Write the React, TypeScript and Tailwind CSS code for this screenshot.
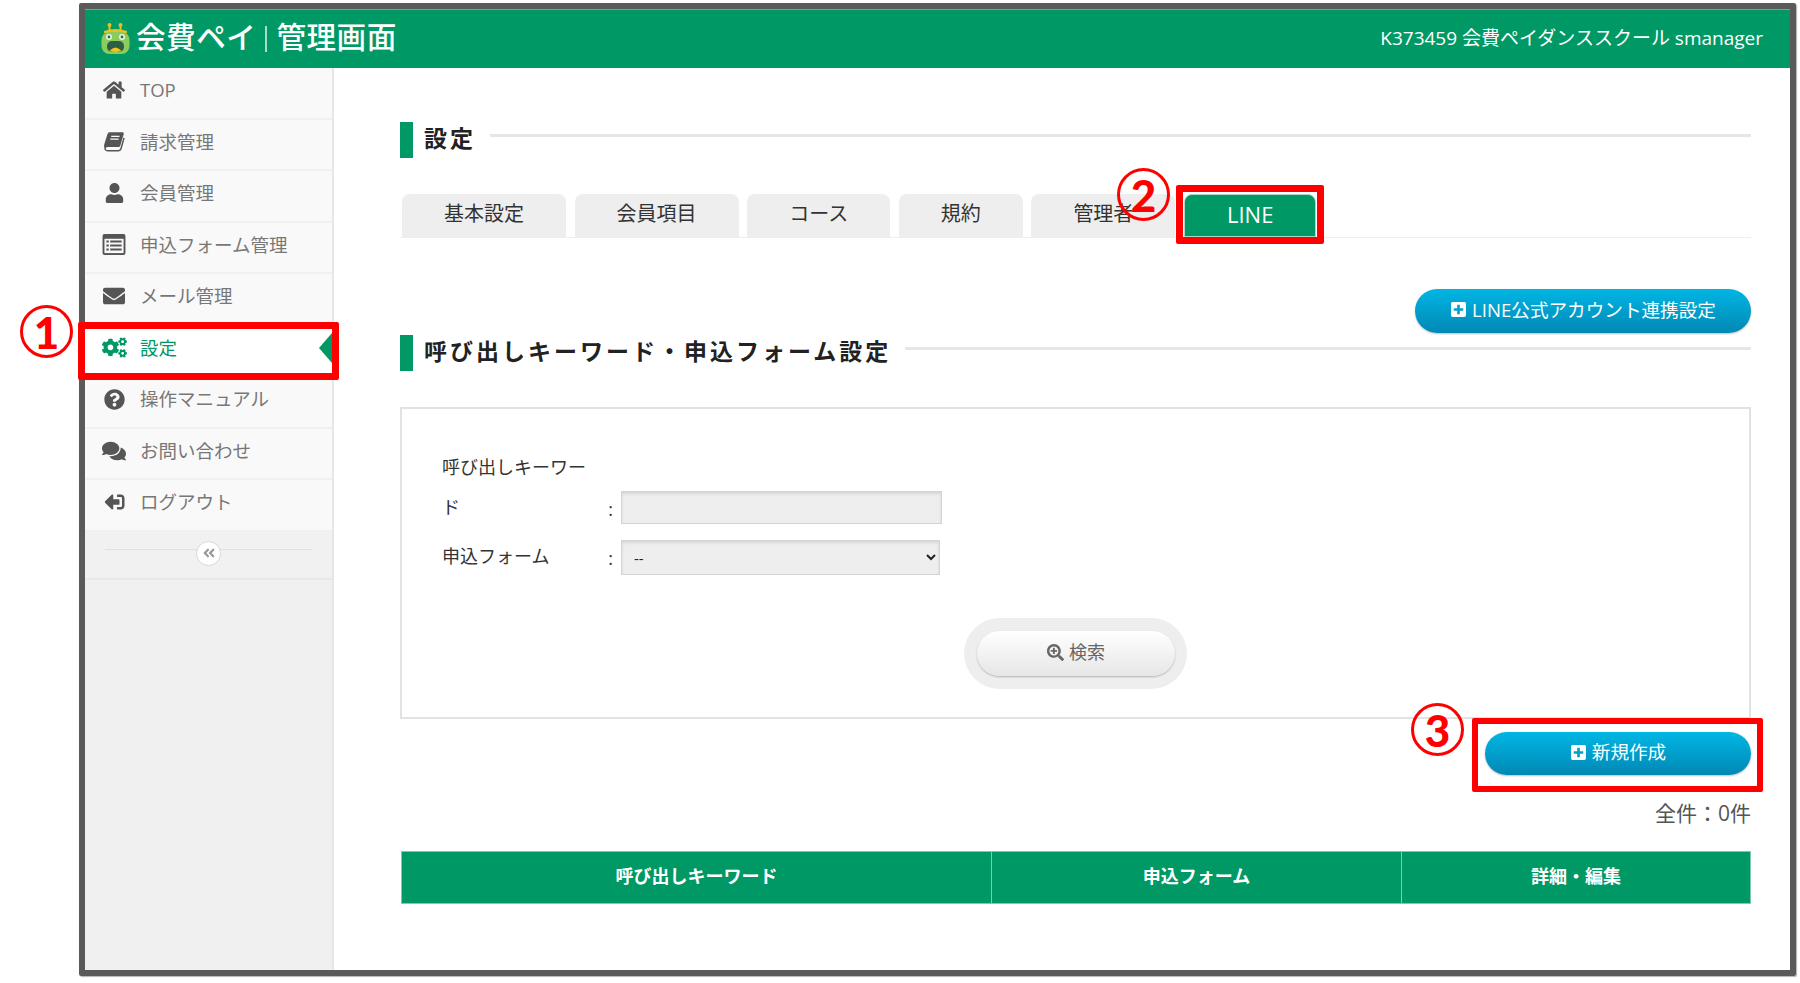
import {
  FaHome,
  FaUser,
  FaEnvelope,
  FaCogs,
  FaQuestionCircle,
  FaComments,
  FaSignOutAlt,
  FaPlusSquare,
  FaSearchPlus,
  FaAngleDoubleLeft,
} from "react-icons/fa";

function BookIcon() {
  return (
    <svg width="22" height="21" viewBox="0 0 24 22" fill="currentColor">
      <path d="M7 1 H21.5 Q23 1 22.6 3 L18.8 15.5 Q18.4 17 17 17 H5 Q3 17 2.6 19 L1.2 17 Q1 16 1.4 14 L4.8 3 Q5.4 1 7 1 Z" />
      <path d="M2.2 17.5 Q2 21 5 21 H17 Q19 21 19.6 19 L23 7" fill="none" stroke="currentColor" strokeWidth="1.6" />
      <path d="M9 5.5 H18 M8 8.5 H17" stroke="#f9f9f9" strokeWidth="1.3" />
    </svg>
  );
}

function FormIcon() {
  return (
    <svg width="24" height="21" viewBox="0 0 24 22">
      <rect width="24" height="22" rx="2" fill="currentColor" />
      <rect x="2" y="5" width="20" height="15" fill="#f9f9f9" />
      <path d="M4 6.8 H6.5 V9 H4 Z M4 11 H6.5 V13.2 H4 Z M4 15.2 H6.5 V17.4 H4 Z M8 6.8 H20 V9 H8 Z M8 11 H20 V13.2 H8 Z M8 15.2 H20 V17.4 H8 Z" fill="currentColor" />
    </svg>
  );
}

const menu = [
  { label: "TOP", icon: <FaHome className="w-[22px] h-[22px]" /> },
  { label: "請求管理", icon: <BookIcon /> },
  { label: "会員管理", icon: <FaUser className="w-[19px] h-[20px]" /> },
  { label: "申込フォーム管理", icon: <FormIcon /> },
  { label: "メール管理", icon: <FaEnvelope className="w-[24px] h-[22px]" /> },
  { label: "設定", icon: <FaCogs className="w-[25px] h-[23px]" />, active: true },
  { label: "操作マニュアル", icon: <FaQuestionCircle className="w-[21px] h-[21px]" /> },
  { label: "お問い合わせ", icon: <FaComments className="w-[24px] h-[22px]" /> },
  { label: "ログアウト", icon: <FaSignOutAlt className="w-[21px] h-[20px] -scale-x-100" /> },
];

const tabs = ["基本設定", "会員項目", "コース", "規約", "管理者", "LINE"];

function Logo() {
  return (
    <svg width="29" height="31" viewBox="0 0 29 31" className="shrink-0">
      <path d="M8.5 8 L8.5 2 M19.5 8 L19.5 2" stroke="#e8c020" strokeWidth="2" />
      <circle cx="8.5" cy="2" r="2" fill="#e8c020" />
      <circle cx="19.5" cy="2" r="2" fill="#e8c020" />
      <path d="M3 8 Q14 4 26 8 L26 10 H3 Z" fill="#e8c020" />
      <rect x="0.5" y="9" width="28" height="22" rx="8" fill="#8ccc5c" />
      <circle cx="8" cy="14" r="3" fill="#e9f4e4" />
      <circle cx="21" cy="14" r="3" fill="#e9f4e4" />
      <circle cx="8" cy="14" r="1.4" fill="#2c6a50" />
      <circle cx="21" cy="14" r="1.4" fill="#2c6a50" />
      <rect x="6" y="18" width="17" height="11" rx="5" fill="#2a6048" />
      <path d="M8.5 28 Q14.5 21 20.5 28 Q14.5 30 8.5 28 Z" fill="#f5c518" />
    </svg>
  );
}

function SectionTitle({ children }: { children: React.ReactNode }) {
  return (
    <div className="flex h-[36px]">
      <div className="w-[13px] bg-[#009966]" />
      <h2 className="pl-[11px] pr-[14px] text-[23px] leading-[33px] font-bold tracking-[3px] text-[#222]">
        {children}
      </h2>
      <div className="flex-1 h-[3px] mt-[12px] bg-[#e6e6e6]" />
    </div>
  );
}

function BlueButton({ label, className }: { label: string; className: string }) {
  return (
    <button
      className={`flex items-center justify-center gap-[5px] pb-[3px] rounded-full bg-gradient-to-b from-[#00b6e4] to-[#0288b4] text-white text-[18.6px] shadow-[0_1px_2px_rgba(0,0,0,0.25)] ${className}`}
    >
      <FaPlusSquare className="w-[17px] h-[17px]" />
      {label}
    </button>
  );
}

function Marker({ n, className }: { n: number; className: string }) {
  return (
    <span
      className={`absolute w-[53px] h-[53px] flex items-center justify-center rounded-full border-[3px] border-[#ff0000] text-[#ff0000] text-[44px] font-black font-['Lato',sans-serif] ${className}`}
    >
      {n}
    </span>
  );
}

export default function App() {
  return (
    <div className="relative w-[1800px] h-[983px] overflow-hidden bg-white pl-[79px] pt-[3px] font-['Open_Sans','Noto_Sans_CJK_JP',sans-serif]">
      <div className="w-[1717px] h-[973px] flex flex-col border-[6px] border-[#5a5a5a] rounded-[2px] shadow-[1px_1px_1px_rgba(0,0,0,0.3)]">
        <header className="h-[59px] shrink-0 flex items-center justify-between bg-[#009966] border-t border-[#4db894] pl-[16px] pr-[27px]">
          <div className="flex items-center text-white font-medium text-[29.6px] tracking-[0.5px]">
            <Logo />
            <span className="ml-[6px] pb-[3px]">会費ペイ</span>
            <span className="w-[2px] h-[26px] bg-[#a8dcc8] mx-[9px]" />
            <span className="pb-[3px]">管理画面</span>
          </div>
          <div className="text-white text-[19px] pb-[2px]">K373459 会費ペイダンススクール smanager</div>
        </header>

        <div className="flex-1 flex min-h-0">
          <aside className="w-[249px] shrink-0 bg-[#f0f0f0] border-r-2 border-[#e6e6e6]">
            {menu.map((m) => (
              <div
                key={m.label}
                className={`relative h-[51.5px] flex items-center pb-[5px] pl-[16px] border-b-2 border-[#f0f0f0] text-[18.5px] ${
                  m.active ? "bg-white text-[#009966]" : "bg-[#f9f9f9] text-[#777]"
                }`}
              >
                <span className={`w-[26px] flex justify-center ${m.active ? "text-[#009966]" : "text-[#555]"}`}>
                  {m.icon}
                </span>
                <span className="ml-[13px]">{m.label}</span>
                {m.active && (
                  <span className="absolute right-0 top-[7px] w-0 h-0 border-y-[15px] border-y-transparent border-r-[13px] border-r-[#009966]" />
                )}
              </div>
            ))}
            <div className="relative h-[48px] pt-[17px] border-b-2 border-[#e8e8e8] bg-[#f1f1f1]">
              <div className="mx-[20px] h-px bg-[#e0e0e0]" />
              <span className="absolute left-[111px] top-[9px] w-[25px] h-[25px] flex items-center justify-center rounded-full bg-white border border-[#d8d8d8] text-[#999]">
                <FaAngleDoubleLeft className="w-[14px] h-[14px]" />
              </span>
            </div>
          </aside>

          <main className="flex-1 pl-[66px] pr-[39px] pt-[54px] bg-white">
            <SectionTitle>設定</SectionTitle>

            <div className="mt-[36px] flex gap-[8.6px] pl-[2px] h-[44px] border-b border-[#eeeeee]">
              {tabs.map((t) => (
                <div
                  key={t}
                  className={`h-[43px] px-[42px] pb-[3px] flex items-center rounded-t-[8px] ${
                    t === "LINE"
                      ? "bg-[#009966] text-white text-[22px] border border-[#a9d8c3]"
                      : "bg-[#eeeeee] text-[#333] text-[20px]"
                  }`}
                >
                  {t}
                </div>
              ))}
            </div>

            <div className="mt-[51px] flex justify-end">
              <BlueButton label="LINE公式アカウント連携設定" className="w-[336px] h-[44px]" />
            </div>

            <div className="mt-[2px]">
              <SectionTitle>呼び出しキーワード・申込フォーム設定</SectionTitle>
            </div>

            <div className="mt-[36px] h-[312px] border-2 border-[#e2e2e2] pl-[40px] pt-[38px] text-[18px] text-[#333] leading-[40px]">
              <div className="flex items-end">
                <div className="w-[160px]">呼び出しキーワード</div>
                <div className="w-[17px] text-center leading-[36px]">:</div>
                <input
                  readOnly
                  className="ml-[2px] w-[321px] h-[33px] mb-[3px] bg-[#eeeeee] border border-[#d4d4d4] shadow-[inset_0_2px_3px_rgba(0,0,0,0.1)]"
                />
              </div>
              <div className="flex items-center mt-[9px]">
                <div className="w-[160px] pb-[3px]">申込フォーム</div>
                <div className="w-[17px] text-center">:</div>
                <select className="ml-[2px] w-[319px] h-[35px] pl-[8px] text-[15px] text-[#222] bg-[#eeeeee] border border-[#d4d4d4] shadow-[inset_0_2px_3px_rgba(0,0,0,0.1)]">
                  <option>--</option>
                </select>
              </div>
              <div className="mt-[39px] -ml-[40px] flex justify-center">
                <div className="w-[223px] h-[71px] px-[13px] py-[13px] rounded-full bg-[#eeeeee]">
                  <button className="w-[198px] h-[45px] pb-[3px] flex items-center justify-center gap-[5px] rounded-full bg-gradient-to-b from-white to-[#e6e6e6] text-[#666] text-[18px] leading-none shadow-[0_1px_2px_rgba(0,0,0,0.25)]">
                    <FaSearchPlus className="w-[17px] h-[17px]" />
                    検索
                  </button>
                </div>
              </div>
            </div>

            <div className="mt-[13px] flex justify-end">
              <BlueButton label="新規作成" className="w-[266px] h-[43px]" />
            </div>

            <div className="mt-[24px] text-right text-[21px] leading-[28px] text-[#555]">全件：0件</div>

            <div className="mt-[24px] ml-[1px] h-[53px] pb-[2px] flex bg-[#009966] border border-[#7fcbb0] text-white text-[18px] font-bold">
              <div className="w-[590px] flex items-center justify-center border-r border-[#7fcbb0] -mb-[2px] pb-[2px]">
                呼び出しキーワード
              </div>
              <div className="w-[410px] flex items-center justify-center border-r border-[#7fcbb0] -mb-[2px] pb-[2px]">
                申込フォーム
              </div>
              <div className="flex-1 flex items-center justify-center">詳細・編集</div>
            </div>
          </main>
        </div>
      </div>

      {/* 手順の注釈 */}
      <div className="absolute left-[78px] top-[322px] w-[261px] h-[58px] border-[7px] border-[#ff0000] rounded-[2px]" />
      <div className="absolute left-[1176px] top-[185px] w-[148px] h-[59px] border-[7px] border-[#ff0000] rounded-[2px]" />
      <div className="absolute left-[1472px] top-[718px] w-[291px] h-[74px] border-[6px] border-[#ff0000] rounded-[2px]" />
      <Marker n={1} className="left-[20px] top-[305px]" />
      <Marker n={2} className="left-[1117px] top-[168px]" />
      <Marker n={3} className="left-[1411px] top-[703px]" />
    </div>
  );
}
